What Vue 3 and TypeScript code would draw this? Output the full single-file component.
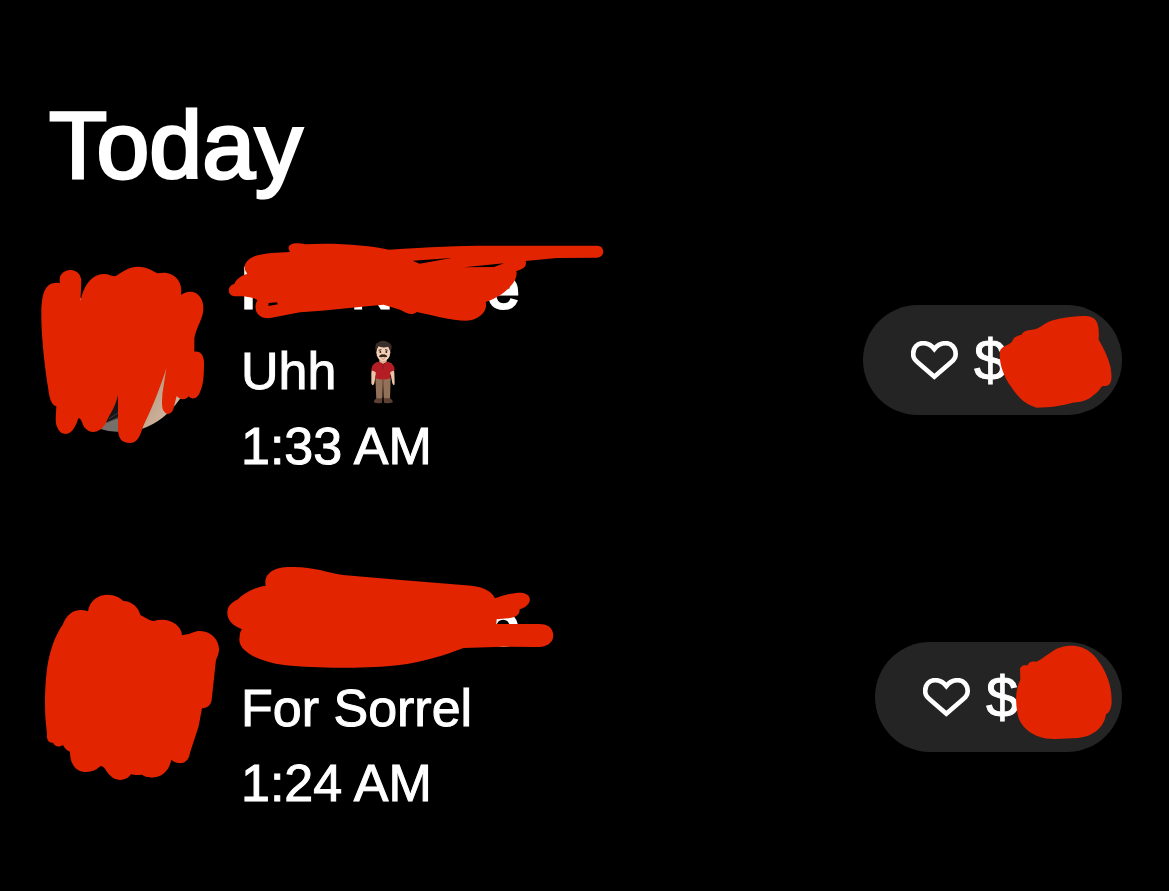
<script setup lang="ts">
interface Mask { viewBox: string; path: string; holes?: string }
interface Payment {
  id: string
  name: string[]
  note: string
  person: boolean
  time: string
  photo: boolean
  avatarMask: Mask
  nameMask: Mask
  amountMask: Mask
}

const payments: Payment[] = [
  {
    id: 'first',
    name: ['F', 'N', 'e'],
    note: 'Uhh',
    person: true,
    time: '1:33 AM',
    photo: true,
    avatarMask: {
      viewBox: '0 0 570 600',
      path: 'M90 84C84 60 102 45 121 45C142 45 154 60 154 79L151 145C155 110 176 57 222 57C236 57 246 64 255 64C275 53 294 35 324 35C351 35 369 48 383 55C430 45 460 78 453 119C491 95 523 123 520 164C519 190 498 219 493 250L493 290C514 288 522 303 522 325C522 360 520 391 511 408C505 431 486 436 476 424C468 436 449 435 440 423L431 458C427 477 410 483 402 469C393 461 397 430 397 418L409 339C397 379 373 446 340 512C330 542 325 563 298 564C268 564 263 540 264 514L264 419C257 457 237 479 226 507C207 536 181 537 164 518C156 508 155 489 145 490C139 508 129 536 107 537C87 537 77 515 77 493L79 454C62 452 57 421 54 397C45 339 33 243 34 171C36 112 45 79 90 84Z'
    },
    nameMask: {
      viewBox: '0 0 1200 285',
      path: 'M210 51C196 30 218 19 256 28C340 22 448 31 507 44C630 36 720 32 800 32L1131 32C1156 31 1156 67 1131 68L1010 69L917 78C922 96 907 103 889 108C896 142 849 184 797 201C804 227 780 256 738 257C695 257 633 240 590 231C575 245 558 232 540 224L491 209C400 216 330 226 240 232L151 249C116 253 96 227 112 195C96 184 60 184 42 184C20 180 22 151 43 147C50 127 73 119 82 116C68 100 71 80 99 66C125 54 170 53 210 51Z',
      holes: 'M578 77L694 69L599 86ZM732 97L852 85L822 96ZM146 204L170 202L174 208L145 213Z'
    },
    amountMask: {
      viewBox: '0 0 870 390',
      path: 'M487 139C489 126 505 121 515 119C522 105 535 107 554 103C571 98 582 85 604 77C632 69 674 63 709 63C741 65 749 87 746 134C761 160 775 187 781 214C785 239 792 277 758 273C748 281 747 290 731 300C717 313 704 320 668 323C628 333 601 337 560 338C520 328 500 300 480 271C458 237 446 200 450 169C453 153 474 154 487 139Z'
    }
  },
  {
    id: 'second',
    name: ['', '', 'e'],
    note: 'For Sorrel',
    person: false,
    time: '1:24 AM',
    photo: false,
    avatarMask: {
      viewBox: '0 0 600 615',
      path: 'M174 79C178 47 205 29 233 29C255 29 270 38 280 48C304 48 326 67 331 90C347 98 358 107 371 108C414 94 455 119 456 151C466 147 475 149 484 144C527 124 567 156 567 193C567 211 558 220 557 233L545 344C543 362 530 369 516 370L506 424L480 503C475 541 441 540 424 524C416 567 382 583 355 576C343 576 340 569 333 569C326 571 311 570 303 568C288 591 254 589 240 571C228 561 226 545 212 543C197 557 181 563 158 560C133 555 120 533 120 500C111 498 104 490 99 480C84 489 74 483 69 473C56 475 49 463 51 448L48 418C41 351 47 259 57 218C68 171 83 140 98 119C113 81 140 68 174 79Z'
    },
    nameMask: {
      viewBox: '0 0 1050 345',
      path: 'M137 77C130 41 161 21 210 21C279 19 318 37 369 45L543 60L737 76C784 78 812 90 825 115C850 106 876 98 903 98C941 101 937 137 899 148C900 167 883 174 864 175L830 178L829 192L950 192C984 190 999 203 1000 227C998 252 977 262 945 261L850 260L731 264C676 285 610 306 533 316C457 325 329 326 213 317C128 311 48 275 59 231C59 220 61 214 66 208C38 196 22 181 22 158C22 137 37 125 52 119C71 101 101 82 137 77Z'
    },
    amountMask: {
      viewBox: '0 0 870 390',
      path: 'M510 115C517 104 524 106 533 106C537 93 549 94 559 95C596 78 611 47 665 47C711 47 738 78 756 109C778 148 785 179 785 216C784 234 779 247 768 253C763 290 731 320 684 324L615 327C553 329 506 291 502 247C495 211 498 172 511 149Z'
    }
  }
]
</script>

<template>
  <main class="feed">
    <h1>Today</h1>
    <ul class="payments">
      <li v-for="p in payments" :key="p.id" :class="['payment', p.id]">
        <div class="avatar">
          <svg v-if="p.photo" class="photo" viewBox="0 0 570 600" aria-hidden="true">
            <defs>
              <linearGradient id="skin" x1="0" y1="0" x2="1" y2="1">
                <stop offset="0" stop-color="#a98b75" />
                <stop offset="1" stop-color="#e2c6ad" />
              </linearGradient>
            </defs>
            <path d="M145 160L148 128L155 130Z" fill="#c9b5a5" />
            <path d="M264 400L270 530Q240 532 212 522L238 478Z" fill="#77706a" />
            <path d="M264 415L264 490L226 503L240 470Z" fill="#17151a" />
            <path d="M236 492L264 474M230 504L264 486" stroke="#514b48" stroke-width="2" />
            <path d="M409 330L460 424L449 433Q402 500 335 522Z" fill="url(#skin)" />
          </svg>
          <svg class="mask" :viewBox="p.avatarMask.viewBox" aria-hidden="true"><path :d="p.avatarMask.path" /></svg>
        </div>
        <div class="details">
          <h2 class="name">
            <span v-for="(part, i) in p.name" :key="i">{{ part }}</span>
            <svg class="mask" :viewBox="p.nameMask.viewBox" aria-hidden="true">
              <path :d="p.nameMask.path + (p.nameMask.holes ?? '')" fill-rule="evenodd" />
            </svg>
          </h2>
          <p class="note">
            <span>{{ p.note }}</span>
            <svg v-if="p.person" class="person" viewBox="0 0 135 210" role="img" aria-label="Man standing">
              <path d="M45 77Q33 83 31 108L31 139Q35 151 40 139L44 116L51 96L80 96L90 117L94 139Q100 151 101 138L100 108Q98 83 86 77Z" fill="#edc4a8" />
              <path d="M43 121L89 121L87 188L69 188L66 140L63 188L46 188Z" fill="#927158" />
              <path d="M66 128L66 182" stroke="#604535" stroke-width="3" />
              <path d="M46 184L64 184L63 197Q50 201 38 196Q39 188 46 184ZM68 184L87 184Q97 190 96 196Q80 201 69 197Z" fill="#5b4033" />
              <path d="M55 65H77V78L66 87L55 78Z" fill="#deb091" />
              <path d="M54 74L66 81L78 74L92 79Q101 88 101 100L88 105L88 124Q67 131 44 124L44 105L31 100Q32 84 43 78Z" fill="#b51d25" />
              <path d="M58 77L66 83L74 77M66 83V96" fill="none" stroke="#7d141d" stroke-width="2" />
              <ellipse cx="67" cy="46" rx="21" ry="26" fill="#f1ceb5" />
              <path d="M45 44Q37 21 54 15Q65 7 80 15Q98 22 89 44Q84 36 82 29Q65 34 52 28Q47 36 45 44Z" fill="#3a2c27" />
              <path d="M53 40L61 38M72 38L80 40M55 58Q61 51 66 54Q71 51 78 58Q71 61 66 58Q61 61 55 58Z" fill="#302019" stroke="#302019" stroke-width="3" />
              <circle cx="58" cy="45" r="3" fill="#302019" /><circle cx="76" cy="45" r="3" fill="#302019" />
              <path d="M62 65Q67 68 71 65" fill="none" stroke="#ba6b57" stroke-width="2" />
            </svg>
          </p>
          <p class="time">{{ p.time }}</p>
        </div>
        <button class="like" type="button" aria-label="Like payment">
          <svg class="heart" viewBox="185 142 141 117" aria-hidden="true">
            <path d="M255 166C245 153 233 148.500 221 148.500C203 148.500 191.500 163 191.500 181C191.500 191 196 199 204 205L255 249L306 205C314 199 319 191 319 181C319 163 307 148.500 289 148.500C277 148.500 265 153 255 166Z" fill="none" stroke="#fff" stroke-width="14" />
          </svg>
          <span class="amount">$</span>
          <svg class="mask" :viewBox="p.amountMask.viewBox" aria-hidden="true"><path :d="p.amountMask.path" /></svg>
        </button>
      </li>
    </ul>
  </main>
</template>

<style>
body {
  margin: 0;
  background: #000;
}
</style>

<style scoped>
.feed {
  box-sizing: border-box;
  min-height: 100vh;
  padding: 92px 47px 60px 48px;
  background: #000;
  color: #fff;
  font-family: "Liberation Sans", Arial, sans-serif;
}
h1,
h2,
p,
ul {
  margin: 0;
  padding: 0;
  font-weight: 400;
}
h1 {
  padding-left: 1px;
  font-size: 95px;
  line-height: 106px;
  -webkit-text-stroke: 3px #fff;
}
.payments {
  display: flex;
  flex-direction: column;
  gap: 102px;
  margin-top: 51px;
  list-style: none;
}
.payment {
  display: grid;
  grid-template-columns: 150px 1fr auto;
  align-items: start;
}
.avatar {
  position: relative;
  height: 150px;
  margin-top: 33px;
}
.photo,
.mask {
  position: absolute;
}
.mask {
  fill: #e32400;
  pointer-events: none;
}
.photo,
.first .avatar .mask {
  left: -18px;
  top: -27px;
  width: 190px;
  height: 200px;
}
.second .avatar .mask {
  left: -18px;
  top: -34px;
  width: 200px;
  height: 205px;
}
.details {
  padding-left: 43px;
}
.name {
  position: relative;
  display: grid;
  grid-template-columns: 110px 136px auto;
  height: 80px;
  margin-bottom: 5px;
  font-size: 58px;
  line-height: 78px;
  -webkit-text-stroke: 3px #fff;
}
.name .mask {
  left: -21px;
}
.first .name .mask {
  top: -14px;
  width: 400px;
  height: 95px;
}
.second .name .mask {
  top: -26px;
  width: 350px;
  height: 115px;
}
.note,
.time {
  font-size: 52px;
  line-height: 75px;
  -webkit-text-stroke: 1px #fff;
}
.note {
  display: flex;
  align-items: center;
  gap: 25px;
  height: 75px;
}
.person {
  width: 45px;
  height: 70px;
}
.like {
  position: relative;
  display: flex;
  align-items: center;
  gap: 16px;
  height: 110px;
  margin-top: 56px;
  padding: 0 48px;
  border: 0;
  border-radius: 55px;
  background: #242424;
  color: #fff;
  font: 58px/110px "Liberation Sans", Arial, sans-serif;
}
.heart {
  width: 47px;
  height: 39px;
}
.amount {
  width: 100px;
  text-align: left;
  -webkit-text-stroke: 1px #fff;
}
.second .amount {
  width: 88px;
}
.like .mask {
  right: -18px;
  top: -10px;
  width: 290px;
  height: 130px;
}
.second .like .mask {
  top: -12px;
}
</style>
